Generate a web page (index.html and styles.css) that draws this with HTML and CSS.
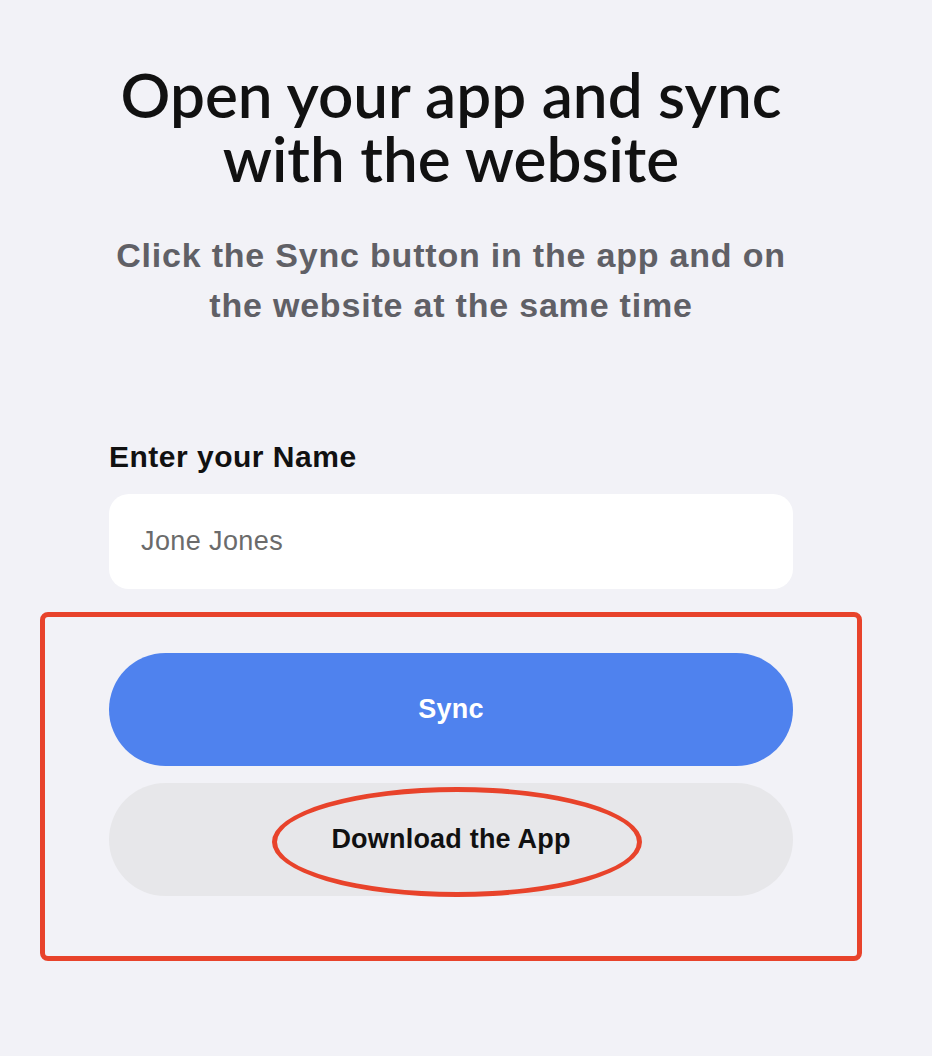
FILE: index.html
```html
<!DOCTYPE html>
<html lang="en">

<head>
    <meta charset="UTF-8">
    <meta name="viewport" content="width=device-width, initial-scale=1.0">
    <title>Sync</title>
    <link rel="stylesheet" href="styles.css">
</head>

<body>
    <div class="page">
        <h1 class="title">Open your app and sync with the website</h1>
        <p class="subtitle">Click the Sync button in the app and on the website at the same time</p>

        <div class="field">
            <label for="user_name">Enter your Name</label>
            <input type="text" id="user_name" placeholder="Jone Jones">
        </div>

        <div class="highlight">
            <button class="sync-btn">Sync</button>
            <button class="download-btn">
                <span class="circle"></span>
                Download the App
            </button>
        </div>
    </div>
</body>

</html>
```

FILE: styles.css
```css
body {
    margin: 0;
    background-color: #f2f2f7;
    font-family: "Liberation Sans", Arial, sans-serif;
}

.page {
    width: 684px;
    margin-left: 109px;
    padding-top: 62px;
}

.title {
    margin: 0 -20px;
    font-family: Lato, "Open Sans", sans-serif;
    font-weight: 600;
    font-size: 62px;
    line-height: 64px;
    text-align: center;
    color: #111;
}

.subtitle {
    margin: 40px -10px 0;
    font-size: 34px;
    font-weight: 600;
    letter-spacing: 0.8px;
    line-height: 50px;
    text-align: center;
    color: #606066;
}

.field {
    margin-top: 111px;
}

.field label {
    display: block;
    font-size: 30px;
    font-weight: 600;
    letter-spacing: 0.5px;
    line-height: 32px;
    color: #111;
}

.field input {
    display: block;
    box-sizing: border-box;
    width: 100%;
    height: 95px;
    margin-top: 21px;
    padding: 0 32px;
    border: none;
    border-radius: 20px;
    background-color: #fff;
    font-family: "Liberation Sans", Arial, sans-serif;
    font-size: 27px;
    letter-spacing: 0.4px;
}

.field input::placeholder {
    color: #6b6b6b;
}

.highlight {
    display: flex;
    flex-direction: column;
    gap: 17px;
    margin: 23px -69px 0;
    padding: 36px 64px 60px;
    border: 5px solid #e8432b;
    border-radius: 8px;
}

.highlight button {
    position: relative;
    height: 113px;
    border: none;
    border-radius: 57px;
    font-family: "Liberation Sans", Arial, sans-serif;
    font-size: 27px;
    font-weight: 600;
    letter-spacing: 0.2px;
}

.sync-btn {
    background-color: #4f82ee;
    color: #fff;
}

.download-btn {
    background-color: #e7e7ea;
    color: #111;
}

.circle {
    position: absolute;
    left: 163px;
    top: 4px;
    width: 360px;
    height: 100px;
    border: 5px solid #e8432b;
    border-radius: 50%;
}
```
